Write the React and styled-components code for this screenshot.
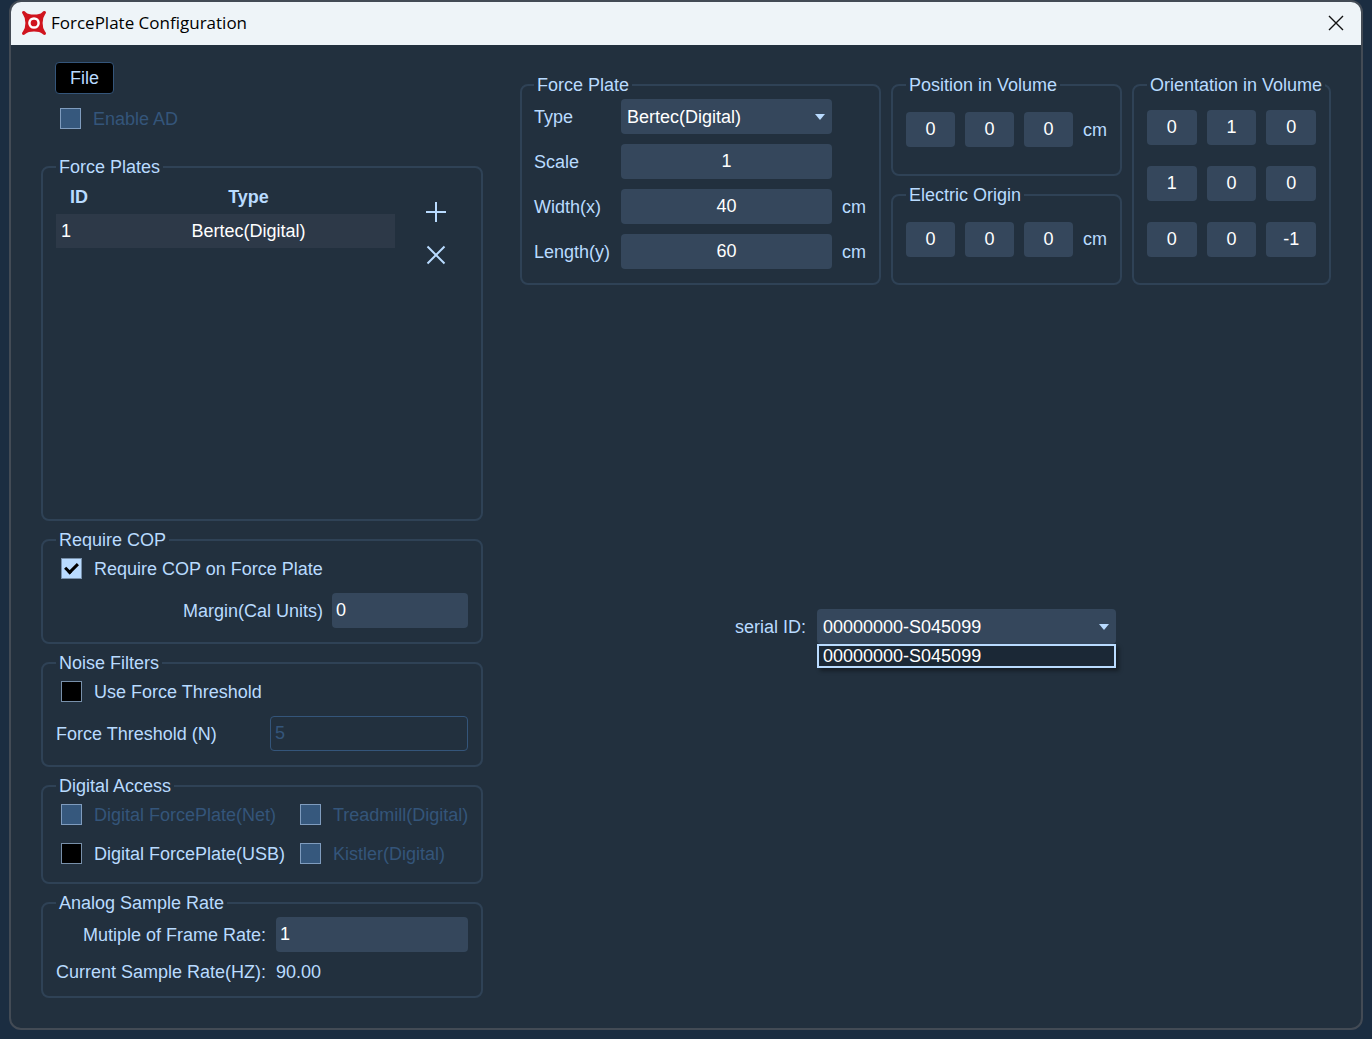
import React from "react";
import styled, { createGlobalStyle } from "styled-components";

const identity = [
  ["0", "1", "0"],
  ["1", "0", "0"],
  ["0", "0", "-1"]
];

const Check = ({ label, ...rest }) => (
  <CheckLabel $off={rest.disabled}>
    <CheckBox type="checkbox" {...rest} />
    {label}
  </CheckLabel>
);

const Vector = ({ title }) => {
  return (
    <Group $pad="17px 13px 26px">
      <Legend>{title}</Legend>
      <VectorRow>
        {["x", "y", "z"].map(axis => (
          <Field key={axis} aria-label={`${title} ${axis}`} defaultValue="0" $center />
        ))}
        <Unit>cm</Unit>
      </VectorRow>
    </Group>
  );
};

const App = () => {
  const [plates, setPlates] = React.useState([
    { id: 1, type: "Bertec(Digital)" }
  ]);
  const [multiple, setMultiple] = React.useState("1");
  const [serial, setSerial] = React.useState("00000000-S045099");

  const addPlate = () =>
    setPlates([...plates, { id: plates.length + 1, type: "Bertec(Digital)" }]);

  return (
    <>
      <GlobalStyle />
      <Window>
        <TitleBar>
          <Logo viewBox="0 0 24 24" aria-hidden="true">
            <path
              fill="#d0141e"
              d="M1.4 0Q2.8 0 4 1.4Q6 3.4 12 3.4Q18 3.4 20 1.4Q21.2 0 22.600 0Q24 .2 24 1.600Q24 2.400 23 3.400Q20.600 6.500 20.600 12Q20.600 17.500 23 20.600Q24 21.600 24 22.400Q24 23.800 22.600 24Q21.200 24 20 22.600Q18 20.600 12 20.600Q6 20.600 4 22.600Q2.800 24 1.400 24Q0 23.800 0 22.400Q0 21.600 1 20.600Q3.400 17.500 3.400 12Q3.400 6.500 1 3.400Q0 2.400 0 1.600Q0 .2 1.400 0Z"
            />
            <circle cx="12" cy="12" r="4.600" fill="none" stroke="#fff" strokeWidth="2.500" />
          </Logo>
          <Title>ForcePlate Configuration</Title>
          <CloseButton aria-label="Close">
            <svg width="16" height="16" viewBox="0 0 16 16">
              <path d="M1 1L15 15M15 1L1 15" stroke="#111" strokeWidth="1.400" />
            </svg>
          </CloseButton>
        </TitleBar>

        <Content>
          <Side>
            <Toolbar>
              <FileButton>File</FileButton>
              <Check label="Enable AD" disabled />
            </Toolbar>

            <Group $pad="3px 13px 14px" $minHeight="364px">
              <Legend>Force Plates</Legend>
              <PlatesRow>
                <PlateTable>
                  <thead>
                    <tr>
                      <th>ID</th>
                      <th>Type</th>
                    </tr>
                  </thead>
                  <tbody>
                    {plates.map(plate => (
                      <tr key={plate.id}>
                        <td>{plate.id}</td>
                        <td>{plate.type}</td>
                      </tr>
                    ))}
                  </tbody>
                </PlateTable>
                <PlateActions>
                  <IconButton aria-label="Add plate" onClick={addPlate}>
                    <svg width="20" height="20" viewBox="0 0 20 20">
                      <path d="M10 0V20M0 10H20" />
                    </svg>
                  </IconButton>
                  <IconButton
                    aria-label="Remove plate"
                    onClick={() => setPlates(plates.slice(0, -1))}
                  >
                    <svg width="20" height="20" viewBox="0 0 20 20">
                      <path d="M1.500 1.500L18.500 18.500M18.500 1.500L1.500 18.500" />
                    </svg>
                  </IconButton>
                </PlateActions>
              </PlatesRow>
            </Group>

            <Group $pad="8px 13px 14px">
              <Legend>Require COP</Legend>
              <Indent>
                <Check label="Require COP on Force Plate" defaultChecked />
              </Indent>
              <FormRow $columns="1fr 136px" $right>
                <label htmlFor="margin">Margin(Cal Units)</label>
                <Field id="margin" defaultValue="0" />
              </FormRow>
            </Group>

            <Group $pad="8px 13px 14px">
              <Legend>Noise Filters</Legend>
              <Indent>
                <Check label="Use Force Threshold" />
              </Indent>
              <FormRow $columns="1fr 198px">
                <label htmlFor="threshold">Force Threshold (N)</label>
                <Field id="threshold" defaultValue="5" disabled />
              </FormRow>
            </Group>

            <Group $pad="8px 13px 18px">
              <Legend>Digital Access</Legend>
              <AccessGrid>
                <Check label="Digital ForcePlate(Net)" disabled />
                <Check label="Treadmill(Digital)" disabled />
                <Check label="Digital ForcePlate(USB)" />
                <Check label="Kistler(Digital)" disabled />
              </AccessGrid>
            </Group>

            <Group $pad="4px 13px 14px">
              <Legend>Analog Sample Rate</Legend>
              <RateGrid>
                <label htmlFor="multiple">Mutiple of Frame Rate:</label>
                <Field
                  id="multiple"
                  value={multiple}
                  onChange={ev => setMultiple(ev.target.value)}
                />
                <span>Current Sample Rate(HZ):</span>
                <output>{(Number(multiple) * 90).toFixed(2)}</output>
              </RateGrid>
            </Group>
          </Side>

          <Main>
            <Settings>
              <Group $pad="4px 13px 14px 12px">
                <Legend>Force Plate</Legend>
                <PlateForm>
                  <label htmlFor="type">Type</label>
                  <SelectWrap>
                    <Select id="type">
                      <option>Bertec(Digital)</option>
                    </Select>
                    <Arrow viewBox="0 0 10 6">
                      <path d="M0 0H10L5 6Z" />
                    </Arrow>
                  </SelectWrap>
                  <span />
                  <label htmlFor="scale">Scale</label>
                  <Field id="scale" defaultValue="1" $center />
                  <span />
                  <label htmlFor="width">Width(x)</label>
                  <Field id="width" defaultValue="40" $center />
                  <Unit>cm</Unit>
                  <label htmlFor="length">Length(y)</label>
                  <Field id="length" defaultValue="60" $center />
                  <Unit>cm</Unit>
                </PlateForm>
              </Group>

              <Vectors>
                <Vector title="Position in Volume" />
                <Vector title="Electric Origin" />
              </Vectors>

              <Group $pad="15px 13px 26px">
                <Legend>Orientation in Volume</Legend>
                <Matrix>
                  {identity.map((row, r) =>
                    row.map((value, c) => (
                      <Field
                        key={`${r}${c}`}
                        aria-label={`Row ${r + 1}, column ${c + 1}`}
                        defaultValue={value}
                        $center
                      />
                    ))
                  )}
                </Matrix>
              </Group>
            </Settings>

            <Serial>
              <label htmlFor="serial">serial ID:</label>
              <SelectWrap>
                <Select
                  id="serial"
                  value={serial}
                  onChange={ev => setSerial(ev.target.value)}
                >
                  <option>00000000-S045099</option>
                </Select>
                <Arrow viewBox="0 0 10 6">
                  <path d="M0 0H10L5 6Z" />
                </Arrow>
                <Menu role="listbox" aria-label="serial ID">
                  <MenuItem
                    role="option"
                    aria-selected="true"
                    onClick={() => setSerial("00000000-S045099")}
                  >
                    00000000-S045099
                  </MenuItem>
                </Menu>
              </SelectWrap>
            </Serial>
          </Main>
        </Content>
      </Window>
    </>
  );
};

const GlobalStyle = createGlobalStyle`
  *, *::before {
    box-sizing: border-box;
  }
  body {
    margin: 0;
    background: #1b2d41;
    color: #b9dbff;
    font: 18px/20px "Liberation Sans", Arial, sans-serif;
  }
  input, select, button {
    font: inherit;
    color: inherit;
  }
`;
const Window = styled.div`
  display: flex;
  flex-direction: column;
  min-height: calc(100vh - 9px);
  margin: 0 9px 9px;
  border: 2px solid #434b55;
  border-radius: 12px;
  background: #22303e;
  overflow: hidden;
`;
const TitleBar = styled.header`
  display: flex;
  align-items: center;
  height: 43px;
  padding: 0 17px 2px 11px;
  background: #eef4f8;
  color: #000;
`;
const Logo = styled.svg`
  width: 24px;
  height: 24px;
`;
const Title = styled.h1`
  flex: 1;
  margin: 0 0 0 5px;
  font: 17px/24px "Open Sans", "Noto Sans", sans-serif;
`;
const CloseButton = styled.button`
  display: flex;
  padding: 0;
  border: none;
  background: none;
`;
const Content = styled.main`
  display: grid;
  grid-template-columns: minmax(0, 442fr) minmax(0, 811fr);
  gap: 37px;
  flex: 1;
  padding: 17px 30px 28px;
`;
const Side = styled.div`
  display: flex;
  flex-direction: column;
  gap: 9px;
`;
const Main = styled.div`
  padding-top: 13px;
`;
const Toolbar = styled.div`
  display: flex;
  flex-direction: column;
  align-items: flex-start;
  gap: 14px;
  padding: 0 14px 19px;

  label {
    margin-left: 5px;
  }
`;
const FileButton = styled.button`
  height: 32px;
  padding: 0 14px;
  border: 1px solid #34557a;
  border-radius: 4px;
  background: #000;
`;
const Group = styled.fieldset`
  min-width: 0;
  min-height: ${props => props.$minHeight || "0"};
  margin: 0;
  padding: ${props => props.$pad};
  border: 2px solid #2f4256;
  border-radius: 8px;
`;
const Legend = styled.legend`
  padding: 0 3px;
  white-space: nowrap;
`;
const PlatesRow = styled.div`
  display: flex;
  align-items: flex-start;
  justify-content: space-between;
`;
const PlateTable = styled.table`
  flex: 1;
  border-collapse: collapse;

  th {
    height: 34px;
    padding: 0;
  }
  th:first-child {
    width: 46px;
  }
  td {
    height: 34px;
    padding: 0 5px;
    background: #2d3948;
    color: #fff;
  }
  td:last-child {
    text-align: center;
  }
`;
const PlateActions = styled.div`
  display: flex;
  flex-direction: column;
  gap: 23px;
  padding: 22px 22px 0 31px;
`;
const IconButton = styled.button`
  display: flex;
  padding: 0;
  border: none;
  background: none;

  path {
    stroke: #b9dbff;
    stroke-width: 2;
  }
`;
const Indent = styled.div`
  padding-left: 5px;
`;
const CheckLabel = styled.label`
  display: flex;
  align-items: center;
  gap: 12px;
  white-space: nowrap;
  color: ${props => (props.$off ? "#34557a" : "#b9dbff")};
`;
const CheckBox = styled.input`
  appearance: none;
  flex: none;
  display: grid;
  place-content: center;
  width: 21px;
  height: 21px;
  margin: 0;
  border: 1px solid #7890aa;
  background: #000;

  &:disabled {
    background: #36587d;
    border-color: #7f9cbe;
  }
  &:checked {
    background: #b9dbff;
  }
  &:checked::before {
    content: "";
    width: 13px;
    height: 8px;
    margin-bottom: 4px;
    border: solid #000;
    border-width: 0 0 3px 3px;
    transform: rotate(-45deg);
  }
`;
const Field = styled.input`
  width: 100%;
  min-width: 0;
  height: 35px;
  padding: 0 4px;
  border: none;
  border-radius: 4px;
  background: #35475c;
  color: #fff;
  text-align: ${props => (props.$center ? "center" : "left")};

  &:disabled {
    border: 1px solid #34557a;
    background: none;
    color: #34557a;
  }
`;
const FormRow = styled.div`
  display: grid;
  grid-template-columns: ${props => props.$columns};
  align-items: center;
  gap: 9px;
  margin-top: 14px;
  text-align: ${props => (props.$right ? "right" : "left")};
`;
const AccessGrid = styled.div`
  display: grid;
  grid-template-columns: 239px 1fr;
  gap: 18px 0;
  padding-left: 5px;
`;
const RateGrid = styled.div`
  display: grid;
  grid-template-columns: auto 1fr;
  align-items: center;
  gap: 10px;
  text-align: right;

  output {
    text-align: left;
  }
`;
const Settings = styled.div`
  display: grid;
  grid-template-columns: minmax(0, 361fr) minmax(0, 231fr) minmax(0, 199fr);
  gap: 10px;
`;
const Vectors = styled.div`
  display: grid;
  gap: 9px;
`;
const PlateForm = styled.div`
  display: grid;
  grid-template-columns: 77px 1fr 24px;
  align-items: center;
  gap: 10px;
`;
const VectorRow = styled.div`
  display: grid;
  grid-template-columns: 1fr 1fr 1fr 24px;
  align-items: center;
  gap: 10px;
`;
const Matrix = styled.div`
  display: grid;
  grid-template-columns: 1fr 1fr 1fr;
  gap: 21px 10px;
`;
const Unit = styled.span`
  white-space: nowrap;
`;
const SelectWrap = styled.div`
  position: relative;
`;
const Select = styled.select`
  appearance: none;
  display: block;
  width: 100%;
  height: 35px;
  padding: 0 6px;
  border: none;
  border-radius: 4px;
  background: #35475c;
  color: #fff;
`;
const Arrow = styled.svg`
  position: absolute;
  top: 15px;
  right: 7px;
  width: 10px;
  height: 6px;
  fill: #b9dbff;
  pointer-events: none;
`;
const Serial = styled.div`
  display: grid;
  grid-template-columns: auto 299px;
  justify-content: center;
  align-items: center;
  gap: 11px;
  margin-top: 324px;
`;
const Menu = styled.ul`
  position: absolute;
  top: 100%;
  left: 0;
  width: 100%;
  margin: 0;
  padding: 0;
  border: 2px solid #b9dbff;
  background: #1b2836;
  color: #fff;
  box-shadow: 3px 3px 4px rgba(0, 0, 0, 0.4);
  list-style: none;
`;
const MenuItem = styled.li`
  padding: 0 4px;
`;

export default App;
